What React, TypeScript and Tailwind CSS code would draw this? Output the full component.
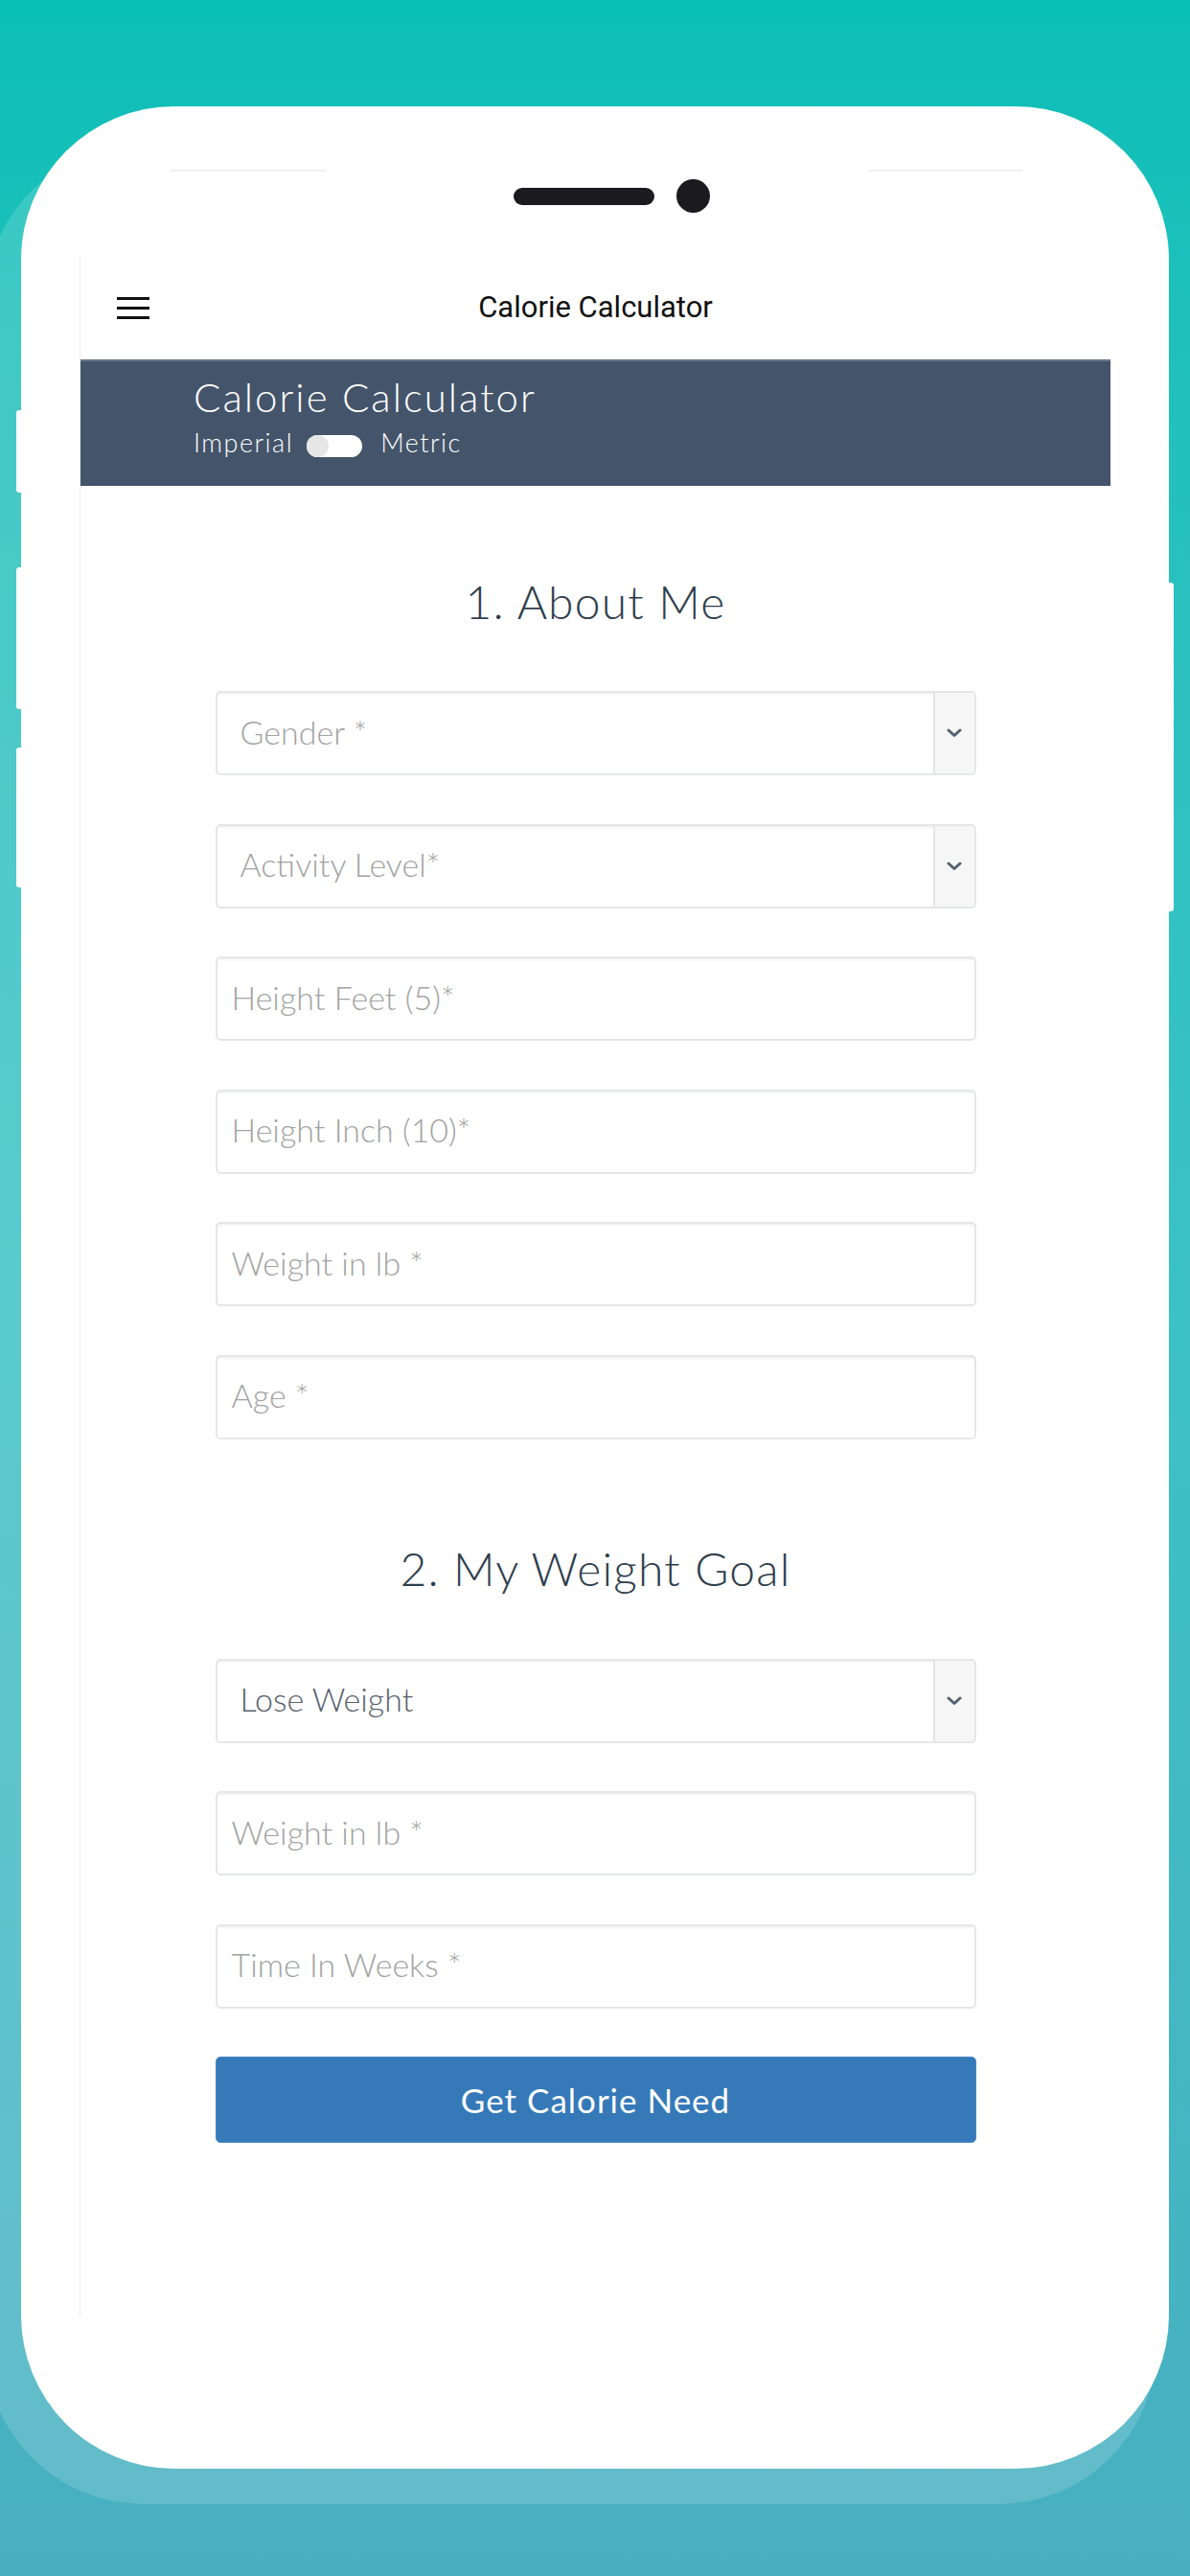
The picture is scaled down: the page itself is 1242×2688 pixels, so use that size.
import React from 'react';

const Chevron: React.FC = () => (
  <svg width="16" height="10" viewBox="0 0 16 10" fill="none">
    <path d="M2 2l6 5.5 6-5.5" stroke="#566270" strokeWidth="3" strokeLinecap="round" strokeLinejoin="round" />
  </svg>
);

const SelectBox: React.FC<{ label: string; filled?: boolean }> = ({ label, filled }) => (
  <div className="flex h-[88px] w-full rounded-[5px] border-2 border-[#e5e7e7] shadow-[inset_0_2px_2px_rgba(0,0,0,0.05)] bg-white overflow-hidden">
    <div
      className={
        filled
          ? 'flex-1 flex items-center pl-[24px] pb-[4px] text-[34px] font-light text-[#56606b]'
          : 'flex-1 flex items-center pl-[24px] pb-[4px] text-[34px] font-light text-[#a2a2a2]'
      }
    >
      {label}
    </div>
    <div className="w-[43px] flex items-center justify-center bg-[#f6f6f6] border-l-2 border-[#e3e3e3]">
      <Chevron />
    </div>
  </div>
);

const TextBox: React.FC<{ placeholder: string }> = ({ placeholder }) => (
  <div className="flex items-center h-[88px] w-full rounded-[5px] border-2 border-[#e5e7e7] shadow-[inset_0_2px_2px_rgba(0,0,0,0.05)] bg-white pl-[15px] pb-[4px] text-[34px] font-light text-[#a2a2a2]">
    {placeholder}
  </div>
);

const SectionTitle: React.FC<{ children: React.ReactNode }> = ({ children }) => (
  <h2 className="text-center text-[48px] leading-[56px] font-light tracking-[1.2px] text-[#2f3e4d]">{children}</h2>
);

export default function App() {
  return (
    <div
      className="relative w-[1242px] h-[2688px] overflow-hidden bg-gradient-to-b from-[#09bfb7] via-[#3cc2c6] to-[#48afc0]"
      style={{ fontFamily: 'Lato, "Noto Sans", sans-serif' }}
    >
      {/* phone back plate */}
      <div className="absolute left-[-15px] top-[150px] w-[1222px] h-[2463px] rounded-[165px] bg-white/15" />
      {/* side buttons */}
      <div className="absolute left-[17px] top-[428px] w-[8px] h-[86px] rounded-l-[3px] bg-white" />
      <div className="absolute left-[17px] top-[592px] w-[8px] h-[148px] rounded-l-[3px] bg-white" />
      <div className="absolute left-[17px] top-[780px] w-[8px] h-[146px] rounded-l-[3px] bg-white" />
      <div className="absolute left-[1216px] top-[608px] w-[9px] h-[343px] rounded-r-[3px] bg-white" />

      <div className="relative pt-[111px] pl-[22px]">
        <div className="w-[1198px] h-[2465px] rounded-[160px] bg-white flex flex-col">
          {/* top of device */}
          <div className="h-[153px] flex flex-col">
            <div className="mt-[66px] flex">
              <div className="ml-[156px] w-[162px] h-[2px] bg-[#f0f0f0]" />
              <div className="ml-[566px] w-[161px] h-[2px] bg-[#f0f0f0]" />
            </div>
            <div className="mt-[8px] flex items-center pl-[514px] gap-[23px]">
              <div className="w-[147px] h-[18px] rounded-full bg-[#1b1a1f]" />
              <div className="w-[35px] h-[35px] rounded-full bg-[#1b1a1f]" />
            </div>
          </div>

          {/* screen */}
          <div className="ml-[61px] w-[1076px] h-[2153px] border-l border-[#ececec] flex flex-col">
            {/* app bar */}
            <div className="h-[111px] flex items-center relative pt-[4px]">
              <div className="ml-[38px] w-[34px] flex flex-col gap-[7px]">
                <div className="h-[3px] bg-[#111]" />
                <div className="h-[3px] bg-[#111]" />
                <div className="h-[3px] bg-[#111]" />
              </div>
              <div
                className="absolute inset-x-0 text-center text-[31px] text-[#111]"
                style={{ fontFamily: 'Roboto, "Noto Sans", sans-serif' }}
              >
                Calorie Calculator
              </div>
            </div>

            {/* header band */}
            <div className="h-[132px] bg-[#44546a] border-t-2 border-[#6b7789] pl-[118px] pt-[12px] text-white">
              <div className="text-[42px] leading-[50px] font-light tracking-[2px]">Calorie Calculator</div>
              <div className="mt-[7px] flex items-center text-[27px] leading-[32px] font-light tracking-[1.5px]">
                <span>Imperial</span>
                <div className="ml-[14px] mt-[6px] w-[58px] h-[23px] rounded-full bg-white flex">
                  <div className="w-[23px] h-[23px] rounded-full bg-[#e6e6e6]" />
                </div>
                <span className="ml-[19px]">Metric</span>
              </div>
            </div>

            {/* form */}
            <div className="pt-[93px] flex flex-col">
              <SectionTitle>1. About Me</SectionTitle>
              <div className="mt-[65px] mx-auto w-[794px] flex flex-col gap-[50.5px]">
                <SelectBox label="Gender *" />
                <SelectBox label="Activity Level*" />
                <TextBox placeholder="Height Feet (5)*" />
                <TextBox placeholder="Height Inch (10)*" />
                <TextBox placeholder="Weight in lb *" />
                <TextBox placeholder="Age *" />
              </div>

              <div className="mt-[107px]">
                <SectionTitle>2. My Weight Goal</SectionTitle>
              </div>
              <div className="mt-[66px] mx-auto w-[794px] flex flex-col gap-[50.5px]">
                <SelectBox label="Lose Weight" filled />
                <TextBox placeholder="Weight in lb *" />
                <TextBox placeholder="Time In Weeks *" />
                <button className="h-[90px] w-full rounded-[5px] bg-[#3579b9] border border-[#4a88c4] text-white text-[35px] tracking-[1px]">
                  Get Calorie Need
                </button>
              </div>
            </div>
          </div>
        </div>
      </div>
    </div>
  );
}
